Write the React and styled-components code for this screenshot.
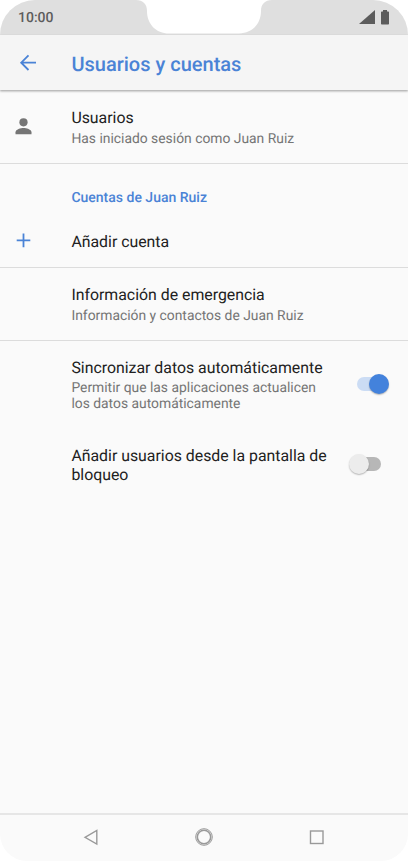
import React from "react";
import styled, { createGlobalStyle } from "styled-components";

const GlobalStyle = createGlobalStyle`
  * {
    box-sizing: border-box;
  }
  body {
    margin: 0;
    background: #fff;
    font-family: Roboto, "Liberation Sans", sans-serif;
    text-rendering: geometricPrecision;
  }
`;

const Phone = styled.div`
  display: flex;
  flex-direction: column;
  width: 408px;
  height: 861px;
  overflow: hidden;
  border-radius: 35px 35px 27px 27px;
  background: #fafafa;
`;

const StatusBar = styled.div`
  display: grid;
  grid-template-columns: 136px 136px 136px;
  height: 35px;
  background: #dfdfdf;
`;

const Clock = styled.span`
  padding: 10px 0 0 18px;
  font-size: 14px;
  font-weight: 500;
  line-height: 16px;
  color: #5c5c5c;
`;

const StatusIcons = styled.div`
  display: flex;
  justify-content: flex-end;
  padding: 9px 18px 0 0;
`;

const Header = styled.header`
  z-index: 1;
  display: grid;
  grid-template-columns: 71.4px 1fr;
  align-items: center;
  flex: none;
  height: 55px;
  background: #f5f5f5;
  box-shadow: 0 1px 2px rgba(0, 0, 0, 0.28), 0 2px 2px rgba(0, 0, 0, 0.08);
`;

const BackButton = styled.button`
  display: flex;
  padding: 0 0 0 18px;
  border: 0;
  background: none;
`;

const Title = styled.h1`
  margin: 2px 0 0;
  font-size: 20px;
  font-weight: 500;
  line-height: 24px;
  color: #4a83d6;
`;

const List = styled.main`
  flex: 1;
`;

const Row = styled.section`
  display: grid;
  grid-template-columns: 71.4px 264px 1fr;
  height: ${(p) => p.$height}px;
  padding-top: ${(p) => p.$top}px;
  border-bottom: ${(p) => (p.$divider ? "1px solid #dcdcdc" : "0")};
`;

const RowIcon = styled.div`
  padding: ${(p) => p.$top}px 0 0 ${(p) => p.$left}px;
  line-height: 0;
`;

const RowText = styled.div`
  grid-column: 2;
`;

const Label = styled.p`
  margin: 0;
  font-size: 15.85px;
  line-height: 19px;
  color: #212121;
`;

const Detail = styled.p`
  margin: ${(p) => (p.$gap ?? 4)}px 0 0;
  font-size: 13.87px;
  line-height: 16px;
  color: #757575;
`;

const GroupTitle = styled.h2`
  margin: 0;
  padding: 25px 0 0 71.4px;
  height: 56px;
  font-size: 14px;
  font-weight: 500;
  line-height: 18px;
  color: #4a83d6;
`;

const Track = styled.div`
  display: flex;
  align-items: center;
  width: 24px;
  height: 14px;
  margin: ${(p) => p.$top}px 0 0 21.6px;
  border-radius: 7px;
  background: ${(p) => (p.$on ? "#cbdcf4" : "#b7b7b7")};
`;

const Thumb = styled.div`
  flex: none;
  width: 20px;
  height: 20px;
  margin-left: ${(p) => (p.$on ? 12 : -8)}px;
  border-radius: 50%;
  background: ${(p) => (p.$on ? "#4382dc" : "#ececec")};
  box-shadow: 0 1px 1.5px rgba(0, 0, 0, 0.28);
`;

const NavBar = styled.nav`
  display: grid;
  grid-template-columns: 1fr 24px 89px 24px 89px 24px 1fr;
  flex: none;
  height: 48px;
  padding-top: 10px;
  border-top: 2px solid #e6e6e6;
  svg:nth-child(1) {
    grid-column: 2;
  }
  svg:nth-child(2) {
    grid-column: 4;
  }
  svg:nth-child(3) {
    grid-column: 6;
  }
`;

function Switch({ on, top }) {
  return (
    <Track $on={on} $top={top}>
      <Thumb $on={on} />
    </Track>
  );
}

export default function App() {
  return (
    <Phone>
      <GlobalStyle />
      <StatusBar>
        <Clock>10:00</Clock>
        <svg width="136" height="35" viewBox="0 0 136 35">
          <path
            d="M0 0C7 0 11 4 11 11C11 24 20 33.5 33 33.5H103C116 33.5 125 24 125 11C125 4 129 0 136 0Z"
            fill="#fff"
          />
        </svg>
        <StatusIcons>
          <svg width="31" height="17" viewBox="0 0 31 17" fill="#5c5c5c">
            <path d="M0 15L16 1V15Z" />
            <path d="M24 1H28V2.5H29.2Q30 2.5 30 3.3V14.7Q30 15.5 29.2 15.5H22.8Q22 15.5 22 14.7V3.3Q22 2.5 22.8 2.5H24Z" />
          </svg>
        </StatusIcons>
      </StatusBar>
      <Header>
        <BackButton aria-label="Atrás">
          <svg width="20" height="18" viewBox="0 0 20 18" fill="none" stroke="#4a83d6" strokeWidth="1.8">
            <path d="M18 8.7H3.5M10.5 1.4L3.2 8.7L10.5 16" />
          </svg>
        </BackButton>
        <Title>Usuarios y cuentas</Title>
      </Header>
      <List>
        <Row $height={74} $top={18} $divider>
          <RowIcon $top={10} $left={15}>
            <svg width="18" height="18" viewBox="0 0 18 18" fill="#757575">
              <circle cx="8.5" cy="4.3" r="4.1" />
              <path d="M.5 16.3V14.2C.5 11.4 5.8 10 8.5 10S16.5 11.4 16.5 14.2V16.3Z" />
            </svg>
          </RowIcon>
          <RowText>
            <Label>Usuarios</Label>
            <Detail>Has iniciado sesión como Juan Ruiz</Detail>
          </RowText>
        </Row>
        <GroupTitle>Cuentas de Juan Ruiz</GroupTitle>
        <Row $height={48} $top={12} $divider>
          <RowIcon $top={1} $left={16}>
            <svg width="16" height="16" viewBox="0 0 16 16" stroke="#4a83d6" strokeWidth="1.8">
              <path d="M7.5 .5V14.2M.7 7.3H14.3" />
            </svg>
          </RowIcon>
          <RowText>
            <Label>Añadir cuenta</Label>
          </RowText>
        </Row>
        <Row $height={73} $top={17} $divider>
          <RowText>
            <Label>Información de emergencia</Label>
            <Detail>Información y contactos de Juan Ruiz</Detail>
          </RowText>
        </Row>
        <Row $height={88} $top={17}>
          <RowText>
            <Label>Sincronizar datos automáticamente</Label>
            <Detail $gap={3}>
              Permitir que las aplicaciones actualicen
              <br />
              los datos automáticamente
            </Detail>
          </RowText>
          <Switch on top={19} />
        </Row>
        <Row $height={56} $top={17}>
          <RowText>
            <Label>
              Añadir usuarios desde la pantalla de
              <br />
              bloqueo
            </Label>
          </RowText>
          <Switch top={11} />
        </Row>
      </List>
      <NavBar>
        <svg width="24" height="24" viewBox="0 0 24 24" fill="none" stroke="#999" strokeWidth="1.4">
          <path d="M6 12.3L17.8 5.5V19Z" />
        </svg>
        <svg width="24" height="24" viewBox="0 0 24 24" fill="none" stroke="#999">
          <circle cx="12" cy="12" r="8.3" strokeWidth="1" />
          <circle cx="12" cy="12" r="6.7" strokeWidth="1.6" />
        </svg>
        <svg width="24" height="24" viewBox="0 0 24 24" fill="none" stroke="#999" strokeWidth="1.4">
          <rect x="5.5" y="6" width="12.5" height="12.5" />
        </svg>
      </NavBar>
    </Phone>
  );
}
